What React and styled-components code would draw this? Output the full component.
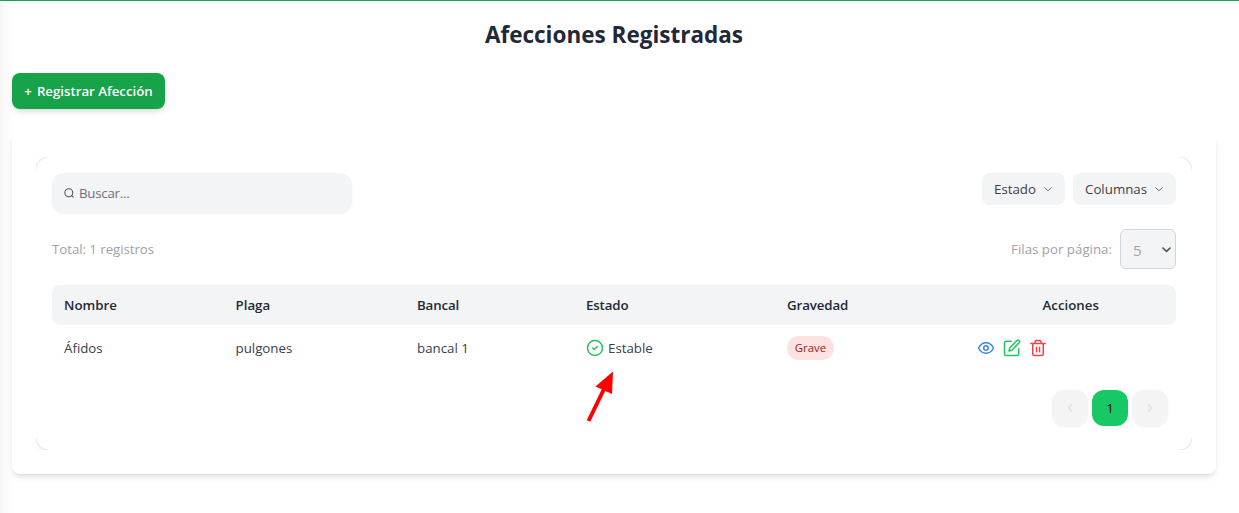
import React from 'react';
import styled, { createGlobalStyle } from 'styled-components';

const Global = createGlobalStyle`
  * { box-sizing: border-box; }
  body { margin: 0; background: #fff; overflow: hidden; font-family: "Segoe UI", "Open Sans", "Noto Sans", sans-serif; font-size: 13.3px; line-height: 20px; color: #374151; }
  button, input, select { font: inherit; color: inherit; border: 0; margin: 0; }
  svg { display: block; flex: none; }
`;
const Text = styled.span`
  display: inline-block; white-space: nowrap; letter-spacing: ${p => p.$track || 0}px;
`;
const Page = styled.main`
  width: 1239px; height: 513px; padding: 18px 23px 0 12px;
  border-top: 1px solid #16a34a;
  background: linear-gradient(90deg, #f5f5f5, #fafafa 4px, #fdfdfd 10px, #fff 14px);
`;
const Title = styled.h1`
  margin: 0; text-align: center; font-size: 22.5px; line-height: 32px; font-weight: 700; color: #1f2937;
`;
const RegisterButton = styled.button`
  display: flex; align-items: center; justify-content: center; gap: 5px; width: 153px; height: 36px; margin-top: 22px; padding: 0;
  border-radius: 8px; background: #16a34a; color: #fff; font-weight: 600;
  box-shadow: 0 4px 6px -1px rgba(0,0,0,.1), 0 2px 4px -2px rgba(0,0,0,.1);
`;
const Card = styled.section`
  width: 1204px; height: 341px; margin-top: 24px; padding: 24px; border-radius: 8px; background: #fff;
  box-shadow: 0 4px 6px -1px rgba(0,0,0,.1), 0 2px 4px -2px rgba(0,0,0,.1);
`;
const Clip = styled.div`height: 293px; overflow: hidden;`;
const Panel = styled.div`
  height: 293px; padding: 16px 16px 0; border-radius: 14px; background: #fff;
  box-shadow: 0 0 5px rgba(0,0,0,.02), 0 2px 10px rgba(0,0,0,.06), 0 0 1px rgba(0,0,0,.3);
`;
const Toolbar = styled.div`display: flex; justify-content: space-between; align-items: flex-start; height: 40px;`;
const Search = styled.label`
  display: flex; align-items: center; gap: 5px; width: 300px; height: 40px; padding: 0 12px; border-radius: 12px;
  background: #f3f4f6; color: #71717a; box-shadow: 0 1px 2px rgba(0,0,0,.05);
`;
const Filters = styled.div`display: flex; gap: 8px;`;
const Filter = styled.button`
  display: flex; align-items: center; justify-content: space-between; width: ${p => p.$w}px; height: 32px;
  padding: 0 12px; border-radius: 8px; background: #f3f4f6; color: #3f3f46;
`;
const Summary = styled.div`
  display: flex; justify-content: space-between; align-items: center; height: 40px; margin-top: 16px; color: #a1a1aa;
`;
const PageSize = styled.div`display: flex; align-items: center; gap: 8px;`;
const SizeSelect = styled.div`
  display: flex; align-items: center; justify-content: space-between; width: 56px; height: 40px; padding: 2px 4px 0 12px;
  border: 1px solid #d1d5db; border-radius: 6px; background: #f3f4f6; font-size: 15.2px;
`;
const SelectArrow = styled.span`display: block; padding-bottom: 2px;`;
const Row = styled.div`
  display: grid; grid-template-columns: 171.5px 181.5px 169px 201px 190.5px 1fr; align-items: center;
`;
const Head = styled(Row)`
  height: 40px; margin-top: 16px; padding: 0 12px; border-radius: 8px; background: #f3f4f6; color: #1f2937; font-weight: 600;
`;
const Body = styled(Row)`height: 46px; padding: 0 12px;`;
const Center = styled.div`text-align: center;`;
const Status = styled.div`display: flex; align-items: center; gap: 4px;`;
const Badge = styled.span`
  display: flex; align-items: center; justify-content: center; width: 47px; height: 24px; border-radius: 12px;
  background: #fee2e2; color: #991b1b; font-size: 11.4px;
`;
const Actions = styled.div`display: flex; gap: 8px; margin-left: -1px;`;
const Pagination = styled.nav`display: flex; justify-content: flex-end; gap: 4px; margin-top: 19px; padding-right: 8px;`;
const PageButton = styled.button`
  display: flex; align-items: center; justify-content: center; width: 36px; height: 36px; padding: 0; border-radius: 12px;
  background: ${p => p.$active ? '#17c964' : '#f4f4f5'}; color: ${p => p.$active ? '#000' : '#d0d0d3'};
  box-shadow: ${p => p.$active ? 'none' : '0 1px 2px rgba(0,0,0,.05)'};
`;
const Pointer = styled.svg`position: absolute; left: 584px; top: 368px;`;

const Icon = ({ size = 18, stroke = 'currentColor', w = 1.5, children }) => (
  <svg width={size} height={size} viewBox="0 0 24 24" fill="none" stroke={stroke} strokeWidth={w} strokeLinecap="round" strokeLinejoin="round">{children}</svg>
);
const Chevron = () => <Icon size={10} stroke="#71717a" w={2.4}><path d="m4 9 8 7 8-7" /></Icon>;

export default function App() {
  return (
    <>
      <Global />
      <Page>
        <Title><Text>Afecciones Registradas</Text></Title>
        <RegisterButton><Text>+</Text><Text $track={-0.03}>Registrar Afección</Text></RegisterButton>
        <Card>
          <Clip>
            <Panel>
              <Toolbar>
                <Search>
                  <Icon size={10} stroke="#52525b" w={2.5}><circle cx="11.5" cy="11.5" r="9.5" /><path d="m19 19 3 3" /></Icon>
                  <Text $track={-0.25}>Buscar...</Text>
                </Search>
                <Filters>
                  <Filter $w={83}><Text>Estado</Text><Chevron /></Filter>
                  <Filter $w={103}><Text>Columnas</Text><Chevron /></Filter>
                </Filters>
              </Toolbar>
              <Summary>
                <Text $track={-0.06}>Total: 1 registros</Text>
                <PageSize>
                  <Text>Filas por página:</Text>
                  <SizeSelect><Text>5</Text><SelectArrow><Icon size={9} stroke="#52525b" w={4.4}><path d="m2.5 8 9.5 9 9.5-9" /></Icon></SelectArrow></SizeSelect>
                </PageSize>
              </Summary>
              <Head>
                <Text>Nombre</Text><Text>Plaga</Text><Text $track={-0.15}>Bancal</Text><Text $track={-0.15}>Estado</Text><Text $track={-0.12}>Gravedad</Text>
                <Center><Text>Acciones</Text></Center>
              </Head>
              <Body>
                <Text>Áfidos</Text><Text>pulgones</Text><Text>bancal 1</Text>
                <Status>
                  <Icon stroke="#22c55e" w={2}><circle cx="12" cy="12" r="10" /><path d="m9 12 2 2 4-4" /></Icon>
                  <Text>Estable</Text>
                </Status>
                <Badge><Text>Grave</Text></Badge>
                <Actions>
                  <Icon stroke="#3b82f6" w={2}><path d="M2 12s3.5-7 10-7 10 7 10 7-3.5 7-10 7S2 12 2 12Z" /><circle cx="12" cy="12" r="3" /></Icon>
                  <Icon stroke="#22c55e" w={2}><path d="M11 3H4a2 2 0 0 0-2 2v15a2 2 0 0 0 2 2h15a2 2 0 0 0 2-2v-7" /><path d="M18.5 2a2.1 2.1 0 0 1 3 3L12 15l-4 1 1-4Z" /></Icon>
                  <Icon stroke="#ef4444" w={2}><path d="M2.5 6h19M19 6v14a2 2 0 0 1-2 2H7a2 2 0 0 1-2-2V6M8 6V4a2 2 0 0 1 2-2h4a2 2 0 0 1 2 2v2M10 11v6M14 11v6" /></Icon>
                </Actions>
              </Body>
              <Pagination>
                <PageButton><Icon size={12} w={2}><path d="M15.5 19 9 12l6.5-7" /></Icon></PageButton>
                <PageButton $active><Text>1</Text></PageButton>
                <PageButton><Icon size={12} w={2}><path d="m8.5 5 6.5 7-6.5 7" /></Icon></PageButton>
              </Pagination>
            </Panel>
          </Clip>
        </Card>
      </Page>
      <Pointer width="36" height="58" viewBox="0 0 36 58">
        <path d="M4.5 53 20.5 20" stroke="#f00" strokeWidth="4" />
        <path d="M29 3.5 28 26 11.5 18.5Z" fill="#f00" />
      </Pointer>
    </>
  );
}
